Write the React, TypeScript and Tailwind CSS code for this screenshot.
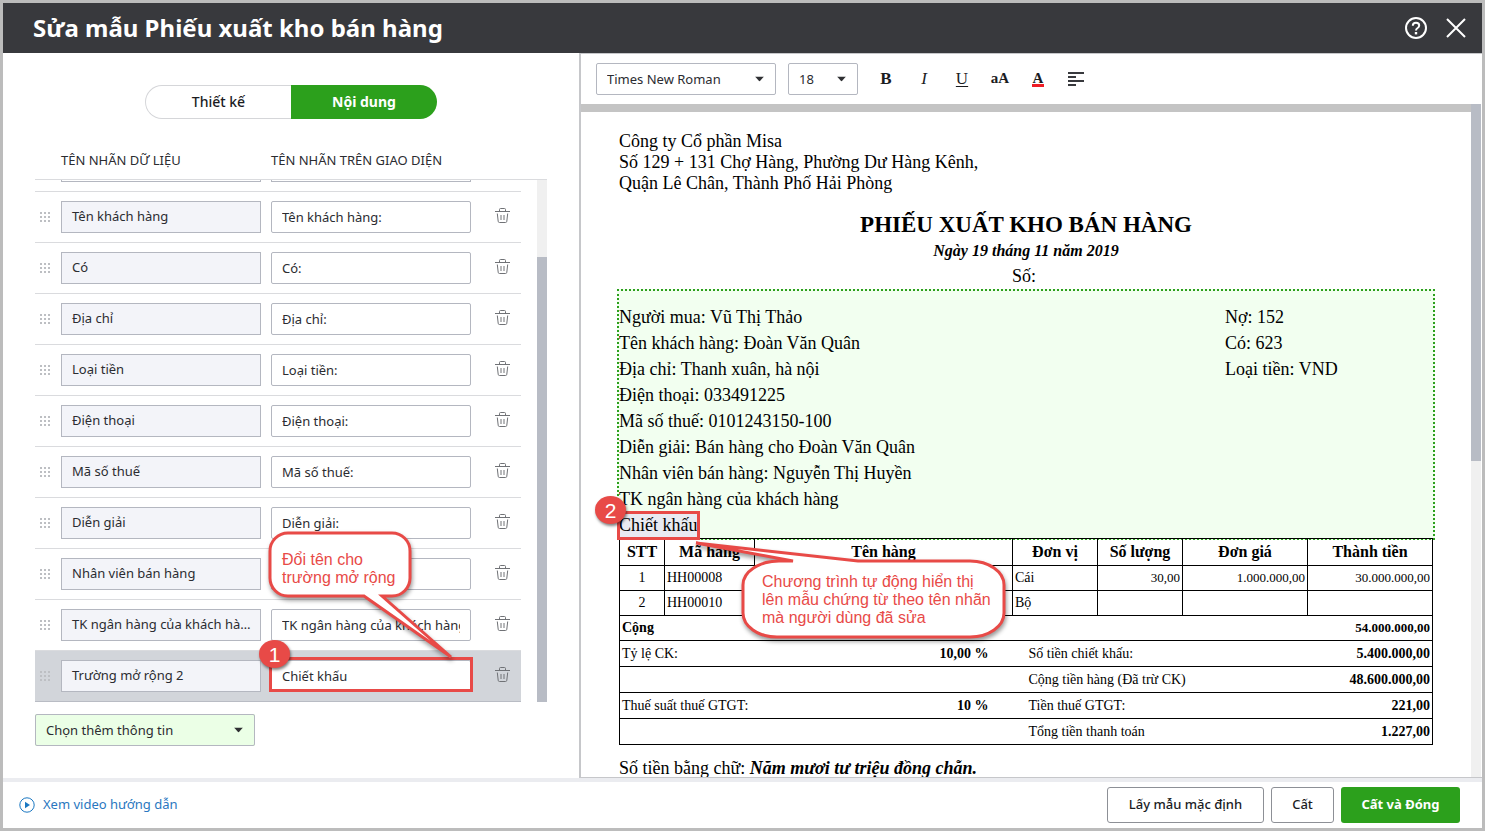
import React, { useState } from 'react';

interface Field {
  id: string;
  name: string;
  label: string;
}

const initialFields: Field[] = [
  { id: 'customer', name: 'Tên khách hàng', label: 'Tên khách hàng:' },
  { id: 'credit', name: 'Có', label: 'Có:' },
  { id: 'address', name: 'Địa chỉ', label: 'Địa chỉ:' },
  { id: 'currency', name: 'Loại tiền', label: 'Loại tiền:' },
  { id: 'phone', name: 'Điện thoại', label: 'Điện thoại:' },
  { id: 'tax-code', name: 'Mã số thuế', label: 'Mã số thuế:' },
  { id: 'description', name: 'Diễn giải', label: 'Diễn giải:' },
  { id: 'seller', name: 'Nhân viên bán hàng', label: 'Nhân viên bán hàng:' },
  { id: 'bank', name: 'TK ngân hàng của khách hàng', label: 'TK ngân hàng của khách hàng' },
  { id: 'extra-2', name: 'Trường mở rộng 2', label: 'Chiết khấu' },
];

const infoLines = [
  ['Người mua: Vũ Thị Thảo', 'Nợ: 152'],
  ['Tên khách hàng: Đoàn Văn Quân', 'Có: 623'],
  ['Địa chỉ: Thanh xuân, hà nội', 'Loại tiền: VND'],
  ['Điện thoại: 033491225', ''],
  ['Mã số thuế: 0101243150-100', ''],
  ['Diễn giải: Bán hàng cho Đoàn Văn Quân', ''],
  ['Nhân viên bán hàng: Nguyễn Thị Huyền', ''],
  ['TK ngân hàng của khách hàng', ''],
];

const items = [
  { no: 1, code: 'HH00008', unit: 'Cái', qty: '30,00', price: '1.000.000,00', total: '30.000.000,00' },
  { no: 2, code: 'HH00010', unit: 'Bộ', qty: '', price: '', total: '' },
];

const summary = [
  { left: 'Tỷ lệ CK:', rate: '10,00 %', right: 'Số tiền chiết khấu:', amount: '5.400.000,00' },
  { left: '', rate: '', right: 'Cộng tiền hàng (Đã trừ CK)', amount: '48.600.000,00' },
  { left: 'Thuế suất thuế GTGT:', rate: '10 %', right: 'Tiền thuế GTGT:', amount: '221,00' },
  { left: '', rate: '', right: 'Tổng tiền thanh toán', amount: '1.227,00' },
];

const TrashIcon = () => (
  <svg width="16" height="16" viewBox="0 0 16 16" fill="none" stroke="#707276">
    <path d="M0 4.5H15M4.5 4V2.5Q4.5 1.5 5.5 1.5H9.5Q10.5 1.5 10.5 2.5V4" />
    <path d="M2.3 6.5L3.2 14.3Q3.3 15.5 4.5 15.5H10.5Q11.7 15.5 11.8 14.3L12.7 6.5" />
    <path d="M6 8V13M9 8V13" />
  </svg>
);

const DragHandle = () => (
  <svg width="10" height="10" viewBox="0 0 10 10" fill="#bdbfc3">
    {[0, 4, 8].map((y) => [0, 4, 8].map((x) => <rect key={`${x}-${y}`} x={x} y={y} width="2" height="2" />))}
  </svg>
);

const Caret = () => (
  <svg className="pointer-events-none absolute right-3 top-1/2 -translate-y-1/2" width="9" height="5" viewBox="0 0 9 5" fill="#2f3033">
    <path d="M0 0H9L4.5 5Z" />
  </svg>
);

const Dropdown = ({ label, value, className }: { label: string; value: string; className: string }) => (
  <div className={`relative h-8 ${className}`}>
    <select
      aria-label={label}
      className="h-full w-full appearance-none rounded-[2px] border border-[#b4b7c0] bg-transparent pl-[10px] pr-6 pt-px text-[13px] text-[#2b2c31] outline-none"
    >
      <option>{value}</option>
    </select>
    <Caret />
  </div>
);

const Badge = ({ children, className }: { children: React.ReactNode; className: string }) => (
  <span
    className={`absolute z-20 flex h-7 w-[31px] items-center justify-center rounded-[50%] bg-[#e84a47] font-['Liberation_Sans',sans-serif] text-[21px] leading-none text-white shadow-[1px_2px_3px_rgba(0,0,0,0.5)] ${className}`}
  >
    {children}
  </span>
);

const Header = () => (
  <header className="flex h-[50px] shrink-0 items-center justify-between bg-[#38393d] pl-[30px] pr-4 text-white">
    <h1 className="text-2xl font-bold">Sửa mẫu Phiếu xuất kho bán hàng</h1>
    <div className="flex items-center gap-[18px]">
      <button type="button" aria-label="Trợ giúp">
        <svg width="24" height="24" viewBox="0 0 24 24" fill="none" stroke="#fff" strokeWidth="2">
          <circle cx="12" cy="12" r="10" />
          <path d="M8.8 9.8Q8.8 6.8 12 6.8Q15.2 6.8 15.2 9.5Q15.2 11 13.6 12Q12 12.9 12 14.6" />
          <path d="M12 16V18.4" strokeWidth="2.4" />
        </svg>
      </button>
      <button type="button" aria-label="Đóng">
        <svg width="20" height="20" viewBox="0 0 20 20" fill="none" stroke="#fff" strokeWidth="2">
          <path d="M1 1L19 19M19 1L1 19" />
        </svg>
      </button>
    </div>
  </header>
);

const FieldRow = ({ field, active, onChange }: { field: Field; active: boolean; onChange: (label: string) => void }) => (
  <div className={`flex shrink-0 items-center border-b py-[9px] pl-[5px] ${active ? 'border-[#b9bcc4] bg-[#d2d5da]' : 'border-[#dadbde]'}`}>
    <DragHandle />
    <label
      htmlFor={field.id}
      className="ml-[11px] block h-8 w-[200px] truncate border border-[#b4b7c0] bg-[#f3f4f9] pl-[10px] pr-[5px] text-[13px] leading-7 text-[#2b2c31]"
    >
      {field.name}
    </label>
    <div className="relative ml-[10px] h-8 w-[200px]">
      <input
        id={field.id}
        type="text"
        value={field.label}
        onChange={(e) => onChange(e.target.value)}
        className="h-full w-full rounded-[2px] border border-[#b4b7c0] bg-white px-[10px] text-[13px] text-[#2b2c31] outline-none"
      />
      {active && (
        <>
          <div className="pointer-events-none absolute -left-[2px] -right-[2px] -top-[3px] bottom-0 border-[3px] border-[#e84a47]" />
          <Badge className="-left-3 -top-5">1</Badge>
        </>
      )}
    </div>
    <button type="button" aria-label={`Xóa ${field.name}`} className="-mt-[5px] ml-6">
      <TrashIcon />
    </button>
  </div>
);

const FieldsPanel = () => {
  const [fields, setFields] = useState<Field[]>(initialFields);

  const handleChange = (id: string, label: string) => {
    setFields((prev) => prev.map((f) => (f.id === id ? { ...f, label } : f)));
  };

  return (
    <section className="w-[578px] shrink-0 border-r-2 border-[#c6c7ca] pl-8 pr-8 pt-8">
      {/* Tabs */}
      <div className="mx-auto flex h-[34px] w-[292px] text-sm">
        <button type="button" className="w-[146px] rounded-l-full border border-r-0 border-[#d5d6d9] font-medium text-[#1b1c1f]">
          Thiết kế
        </button>
        <button type="button" className="w-[146px] rounded-r-full bg-[#2ca01c] font-bold text-white">
          Nội dung
        </button>
      </div>

      <div className="mt-[30px] flex h-[30px] pl-[26px] pt-px text-[13px] leading-5 text-[#2b2c31]">
        <span className="w-[210px]">TÊN NHÃN DỮ LIỆU</span>
        <span>TÊN NHÃN TRÊN GIAO DIỆN</span>
      </div>

      {/* Field list */}
      <div className="relative flex h-[523px] border-t border-[#dadbde]">
        <div className="w-[486px]">
          {/* Bottom edge of the row scrolled out of view */}
          <div className="flex h-3 items-start gap-[10px] border-b border-[#dadbde] pl-[26px]">
            <div className="h-[2px] w-[200px] border border-t-0 border-[#b4b7c0]" />
            <div className="h-[2px] w-[200px] border border-t-0 border-[#b4b7c0]" />
          </div>
          {fields.map((field) => (
            <FieldRow
              key={field.id}
              field={field}
              active={field.id === 'extra-2'}
              onChange={(label) => handleChange(field.id, label)}
            />
          ))}
        </div>
        <div className="ml-4 flex w-[10px] flex-col justify-end bg-[#f0f0f0]">
          <div className="h-[445px] bg-[#b8bcc5]" />
        </div>

        <div className="pointer-events-none absolute left-[227px] top-[345px] z-10">
          <svg className="drop-shadow-[1px_3px_2px_rgba(0,0,0,0.4)]" width="200" height="140" viewBox="0 0 200 140" fill="#fff" stroke="#e84a47" strokeWidth="3">
            <path d="M26 8H130A18 18 0 0 1 148 26V53A18 18 0 0 1 130 71H120L189 132L102 71H26A18 18 0 0 1 8 53V26A18 18 0 0 1 26 8Z" />
          </svg>
          <p className="absolute left-5 top-[26px] whitespace-nowrap font-['Liberation_Sans',sans-serif] text-base leading-[18px] text-[#e84a47]">
            Đổi tên cho
            <br />
            trường mở rộng
          </p>
        </div>
      </div>

      <Dropdown label="Chọn thêm thông tin" value="Chọn thêm thông tin" className="mt-3 w-[220px] bg-[#ebffe6]" />
    </section>
  );
};

const Toolbar = () => (
  <div className="flex h-[51px] shrink-0 items-center border-t border-[#c6c7ca] pl-[15px] font-['Liberation_Serif',serif] text-[#1b1c1f]">
    <Dropdown label="Phông chữ" value="Times New Roman" className="w-[180px] font-['Noto_Sans',sans-serif]" />
    <Dropdown label="Cỡ chữ" value="18" className="ml-3 w-[70px] font-['Noto_Sans',sans-serif]" />
    <div className="ml-[13px] flex items-center gap-2">
      <button type="button" aria-label="Đậm" className="w-[30px] text-[17px] font-bold">B</button>
      <button type="button" aria-label="Nghiêng" className="w-[30px] text-[17px] italic">I</button>
      <button type="button" aria-label="Gạch chân" className="w-[30px] text-[17px] underline underline-offset-2">U</button>
      <button type="button" aria-label="Chữ hoa" className="w-[30px] pb-[2px] text-[15px] font-bold">aA</button>
      <button type="button" aria-label="Màu chữ" className="flex w-[30px] flex-col items-center text-[15px] font-bold leading-3">
        A
        <span className="h-[3px] w-3 bg-[#ee1c25]" />
      </button>
      <button type="button" aria-label="Căn lề" className="flex w-[30px] justify-center">
        <svg width="16" height="14" viewBox="0 0 16 14" fill="#38393d">
          <path d="M0 0H16V2H0ZM0 4H8V6H0ZM0 8H16V10H0ZM0 12H8V14H0Z" />
        </svg>
      </button>
    </div>
  </div>
);

const ItemsTable = () => (
  <table className="relative -mt-[2px] w-full table-fixed border-collapse border border-black text-sm leading-5">
    <colgroup>
      <col className="w-[45px]" />
      <col className="w-[90px]" />
      <col />
      <col className="w-[85px]" />
      <col className="w-[85px]" />
      <col className="w-[125px]" />
      <col className="w-[125px]" />
    </colgroup>
    <thead>
      <tr className="h-[27px] text-base leading-5">
        {['STT', 'Mã hàng', 'Tên hàng', 'Đơn vị', 'Số lượng', 'Đơn giá', 'Thành tiền'].map((h) => (
          <th key={h} className="border border-black p-0 font-bold">{h}</th>
        ))}
      </tr>
    </thead>
    <tbody>
      {items.map((item) => (
        <tr key={item.no} className="h-[25px]">
          <td className="border border-black p-0 text-center">{item.no}</td>
          <td className="border border-black px-[2px] py-0">{item.code}</td>
          <td className="border border-black p-0" />
          <td className="border border-black px-[2px] py-0">{item.unit}</td>
          <td className="border border-black px-[2px] py-0 text-right text-[13px]">{item.qty}</td>
          <td className="border border-black px-[2px] py-0 text-right text-[13px]">{item.price}</td>
          <td className="border border-black px-[2px] py-0 text-right text-[13px]">{item.total}</td>
        </tr>
      ))}
      <tr className="h-[25px] border-b border-black font-bold">
        <td colSpan={6} className="px-[2px] py-0">Cộng</td>
        <td className="px-[2px] py-0 text-right text-[13px]">54.000.000,00</td>
      </tr>
      {summary.map((row) => (
        <tr key={row.right} className="h-[26px] border-b border-black">
          <td colSpan={2} className="whitespace-nowrap px-[2px] py-0">{row.left}</td>
          <td className="py-0 pr-6 text-right font-bold">{row.rate}</td>
          <td colSpan={3} className="py-0 pl-4">{row.right}</td>
          <td className="px-[2px] py-0 text-right font-bold">{row.amount}</td>
        </tr>
      ))}
    </tbody>
  </table>
);

const Preview = () => (
  <section className="flex min-w-0 flex-1 flex-col">
    <Toolbar />
    <div className="flex h-[674px] border-b border-[#c6c7ca]">
      <div className="min-w-0 flex-1 overflow-hidden border-t-8 border-[#c4c4c4] px-[37px] pt-[19px] font-['Liberation_Serif',serif] text-lg leading-[26px] text-black">
        <p className="px-px leading-[21px]">
          Công ty Cổ phần Misa
          <br />
          Số 129 + 131 Chợ Hàng, Phường Dư Hàng Kênh,
          <br />
          Quận Lê Chân, Thành Phố Hải Phòng
        </p>
        <div className="mt-[17px] text-center">
          <h2 className="text-[23px] font-bold leading-7">PHIẾU XUẤT KHO BÁN HÀNG</h2>
          <p className="text-base font-bold italic leading-6">Ngày 19 tháng 11 năm 2019</p>
          <p className="pr-1">Số:</p>
        </div>

        {/* Block being edited */}
        <div className="-mx-px border-2 border-dotted border-[#2ca01c] bg-[#f2fff0] pt-[13px]">
          {infoLines.map(([left, right]) => (
            <div key={left} className="flex">
              <span className="flex-1">{left}</span>
              <span className="w-[208px]">{right}</span>
            </div>
          ))}
          <div className="relative w-[81px]">
            <span className="block bg-[#e9eaf1]">Chiết khấu</span>
            <div className="pointer-events-none absolute -bottom-[2px] -left-[2px] right-0 -top-px z-10 border-[3px] border-[#e84a47]" />
            <Badge className="-left-6 -top-4">2</Badge>
            <div className="pointer-events-none absolute left-[70px] top-[25px] z-10">
              <svg className="drop-shadow-[1px_3px_2px_rgba(0,0,0,0.4)]" width="325" height="112" viewBox="0 0 325 112" fill="#fff" stroke="#e84a47" strokeWidth="3">
                <path d="M169 24H281A34 24 0 0 1 315 48V76A34 24 0 0 1 281 100H88A34 24 0 0 1 54 76V48A36 24 0 0 1 90 24H104L7 6Z" />
              </svg>
              <p className="absolute left-[73px] top-9 whitespace-nowrap font-['Liberation_Sans',sans-serif] text-base leading-[18px] text-[#e84a47]">
                Chương trình tự động hiển thị
                <br />
                lên mẫu chứng từ theo tên nhãn
                <br />
                mà người dùng đã sửa
              </p>
            </div>
          </div>
        </div>
        <div className="px-px">
          <ItemsTable />
          <p className="mt-[10px]">
            Số tiền bằng chữ: <strong className="italic">Năm mươi tư triệu đồng chẵn.</strong>
          </p>
        </div>
      </div>
      <div className="mr-px w-[10px] bg-[#f0f0f0]">
        <div className="h-[357px] bg-[#b8bcc5]" />
      </div>
    </div>
  </section>
);

const Footer = () => (
  <footer className="flex flex-1 items-center justify-between border-t-4 border-[#ebecf0] pl-4 pr-[22px]">
    <a href="#video" className="flex items-center gap-2 text-[13px] text-[#2a77c0]">
      <svg width="16" height="16" viewBox="0 0 16 16" fill="none" stroke="#1b78c2">
        <circle cx="8" cy="8" r="7.2" />
        <path d="M6 4.8L11 8L6 11.2Z" fill="#1b78c2" stroke="none" />
      </svg>
      Xem video hướng dẫn
    </a>
    <div className="flex h-9 gap-[7px] text-[13px] font-medium text-[#1b1c1f]">
      <button type="button" className="w-[157px] rounded-[3px] border border-[#8d9096]">Lấy mẫu mặc định</button>
      <button type="button" className="w-[63px] rounded-[3px] border border-[#8d9096]">Cất</button>
      <button type="button" className="w-[119px] rounded-[3px] bg-[#2ca01c] font-bold text-white">Cất và Đóng</button>
    </div>
  </footer>
);

export default function App() {
  return (
    <div className="flex min-h-screen flex-col border-[3px] border-[#bcbcbc] bg-white font-['Noto_Sans',sans-serif]">
      <Header />
      <main className="flex">
        <FieldsPanel />
        <Preview />
      </main>
      <Footer />
    </div>
  );
}
